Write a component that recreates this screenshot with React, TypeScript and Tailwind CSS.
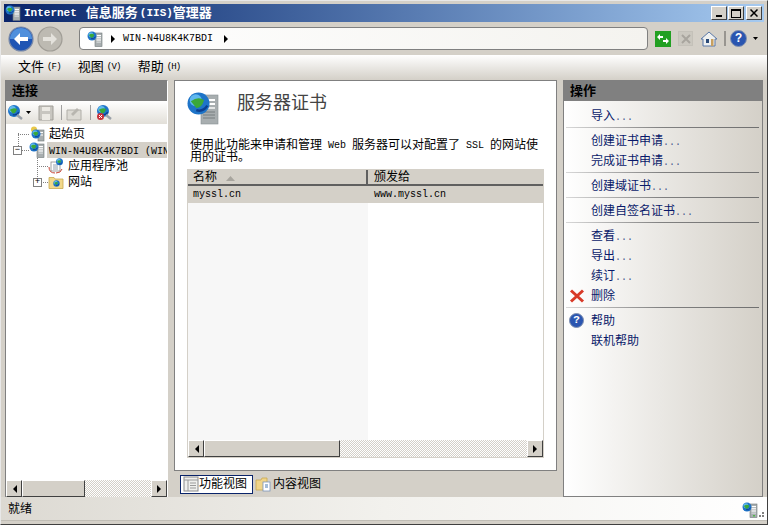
import React from "react";

const FONT = { fontFamily: '"Liberation Mono", "Noto Sans CJK SC", monospace' };

function Globe({ cx, cy, r }: { cx: number; cy: number; r: number }) {
  return (
    <g>
      <circle cx={cx} cy={cy} r={r} fill="#1e74c8" />
      <circle cx={cx - r * 0.25} cy={cy - r * 0.3} r={r * 0.55} fill="#5fb8ee" />
      <path d={`M${cx - r * 0.7} ${cy - r * 0.2} q${r * 0.7} ${-r * 0.5} ${r * 1.2} ${-r * 0.1} q${-r * 0.2} ${r * 0.7} ${-r * 0.7} ${r * 0.7} z`} fill="#3aa83a" />
      <path d={`M${cx - r * 0.2} ${cy + r * 0.6} q${r * 0.6} ${r * 0.2} ${r} ${-r * 0.4}`} stroke="#0c3f90" strokeWidth={r * 0.22} fill="none" />
    </g>
  );
}

function ServerIcon({ size = 16, badge }: { size?: number; badge?: boolean }) {
  return (
    <svg width={size} height={size} viewBox="0 0 16 16" className="shrink-0">
      <rect x="8" y="2" width="7" height="13.5" fill="#a8aeb0" stroke="#70787a" strokeWidth="0.6" />
      <rect x="9.5" y="4" width="4.5" height="1.2" fill="#fff" />
      <rect x="9.5" y="6.2" width="4.5" height="1.2" fill="#fff" />
      <rect x="9.5" y="8.4" width="4.5" height="1.2" fill="#fff" />
      <rect x="9.5" y="10.6" width="4.5" height="1" fill="#dfe3e3" />
      <Globe cx={5} cy={5} r={4.5} />
      {badge && <rect x="11" y="13" width="2" height="1.5" fill="#50b848" />}
    </svg>
  );
}

function ConnectIcon({ stop }: { stop?: boolean }) {
  return (
    <svg width="17" height="17" viewBox="0 0 17 17" className="shrink-0">
      <Globe cx={7} cy={7} r={6} />
      <path d="M10 11l5 4" stroke="#9aa0a8" strokeWidth="2.4" />
      {stop && <circle cx="4.5" cy="12.5" r="3.5" fill="#c8303a" />}
      {stop && <path d="M3 11l3 3M6 11l-3 3" stroke="#fff" strokeWidth="1" />}
    </svg>
  );
}

function StartIcon() {
  return (
    <svg width="16" height="16" viewBox="0 0 16 16" className="shrink-0">
      <rect x="9" y="4" width="6" height="11" fill="#a8aeb0" stroke="#70787a" strokeWidth="0.6" />
      <rect x="10" y="6" width="4" height="1" fill="#fff" />
      <rect x="10" y="8.5" width="4" height="1" fill="#fff" />
      <circle cx="5" cy="3.5" r="3" fill="#e8c84a" />
      <Globe cx={7} cy={8} r={4.5} />
    </svg>
  );
}

function PoolIcon() {
  return (
    <svg width="16" height="16" viewBox="0 0 16 16" className="shrink-0">
      <rect x="3" y="4" width="9" height="9" fill="#fff" stroke="#8a8a8a" strokeWidth="0.8" />
      <path d="M5 7h5M5 9h5M5 11h5" stroke="#7a8a9a" strokeWidth="0.8" />
      <Globe cx={11.5} cy={3.8} r={3.5} />
      <path d="M1 9q0 6 6 6M14 11q-1 4-6 4" stroke="#c84838" strokeWidth="1" fill="none" />
    </svg>
  );
}

function FolderIcon() {
  return (
    <svg width="16" height="16" viewBox="0 0 16 16" className="shrink-0">
      <path d="M1 3.5h5l1 1.5h8v9.5H1z" fill="#f2d88a" stroke="#c8a850" strokeWidth="0.8" />
      <Globe cx={8.5} cy={9.5} r={3.2} />
    </svg>
  );
}

function Arrow({ dir }: { dir: "left" | "right" }) {
  return (
    <svg width="5" height="8" viewBox="0 0 5 8">
      <path d={dir === "left" ? "M5 0v8L1 4z" : "M0 0v8l4-4z"} fill="#000" />
    </svg>
  );
}

function ScrollBar({ thumb }: { thumb: string }) {
  return (
    <div className="flex h-[17px] shrink-0 bg-[repeating-conic-gradient(#d4d0c8_0_25%,#ffffff_0_50%)] bg-[length:2px_2px]">
      <ScrollBtn dir="left" />
      <div style={{ width: thumb }} className="border border-t-white border-l-white border-r-[#404040] border-b-[#404040] bg-[#d4d0c8]" />
      <div className="flex-1" />
      <ScrollBtn dir="right" />
    </div>
  );
}

function ScrollBtn({ dir }: { dir: "left" | "right" }) {
  return (
    <div className="flex h-[17px] w-[16px] shrink-0 items-center justify-center border border-t-white border-l-white border-r-[#404040] border-b-[#404040] bg-[#d4d0c8]">
      <Arrow dir={dir} />
    </div>
  );
}

function PanelHeader({ title }: { title: string }) {
  return (
    <div className="flex h-[20px] shrink-0 items-center bg-[#808080] pl-[6px] pt-[2px] text-[13px] font-bold text-black">
      {title}
    </div>
  );
}

function Action({ label, dots, icon }: { label: string; dots?: boolean; icon?: React.ReactNode }) {
  return (
    <div className="relative flex h-[20px] items-center pl-[27px] pt-[4px] text-[12px] text-[#0a1a6a]">
      {icon && <span className="absolute left-[5px] top-[3px]">{icon}</span>}
      {label}
      {dots && <span className="text-[10px] text-[#4a5a90]">...</span>}
    </div>
  );
}

function Sep() {
  return (
    <div className="flex h-[5px] items-center pl-[2px] pr-[3px]">
      <div className="h-px w-full bg-gradient-to-r from-[#d8d8d8] via-[#808080] to-[#707070]" />
    </div>
  );
}

function TreeRow({ label, icon, indent, expander, expLeft, selected }: { label: string; icon: React.ReactNode; indent: number; expander?: string; expLeft?: number; selected?: boolean }) {
  return (
    <div className="relative flex h-[16px] items-center" style={{ paddingLeft: indent }}>
      {expander && (
        <span className="absolute z-10 flex h-[9px] w-[9px] items-center justify-center border border-[#808080] bg-white text-[9px] leading-none text-black" style={{ left: expLeft, top: 4 }}>
          {expander}
        </span>
      )}
      <span className="absolute top-[8px] h-0 border-t border-dotted border-[#808080]" style={{ left: indent - 11, width: 11 }} />
      {icon}
      <span className={`ml-[2px] flex h-[16px] flex-1 items-center overflow-hidden whitespace-nowrap pl-[2px] pt-[2px] ${selected ? "bg-[#d4d0c8] text-[10px]" : "text-[12px]"}`}>
        {label}
      </span>
    </div>
  );
}

export default function App() {
  return (
    <div style={FONT} className="flex h-[525px] w-[768px] flex-col overflow-hidden border border-[#404040] border-t-[#e8e8e8] border-l-[#e8e8e8] bg-[#d4d0c8] px-[3px] pt-[3px] text-black">
      {/* TITLE BAR */}
      <div className="flex h-[18px] shrink-0 items-center bg-gradient-to-r from-[#0a246a] to-[#a6caf0] pl-[1px] pr-[2px]">
        <ServerIcon />
        <span className="ml-[3px] flex items-center pt-[1px] text-[13px] font-bold text-white">
          <span className="text-[11px]">Internet</span>
          <span className="ml-[9px]">信息服务</span>
          <span className="ml-[2px] text-[11px]">(IIS)</span>
          <span>管理器</span>
        </span>
        <div className="ml-auto flex items-center gap-[1px]">
          <div className="flex h-[14px] w-[16px] items-end justify-center border border-t-white border-l-white border-r-[#404040] border-b-[#404040] bg-[#d4d0c8] pb-[2px]">
            <div className="h-[2px] w-[6px] bg-black" />
          </div>
          <div className="mr-[1px] flex h-[14px] w-[16px] items-center justify-center border border-t-white border-l-white border-r-[#404040] border-b-[#404040] bg-[#d4d0c8]">
            <div className="h-[9px] w-[10px] border border-t-2 border-black" />
          </div>
          <div className="flex h-[14px] w-[16px] items-center justify-center border border-t-white border-l-white border-r-[#404040] border-b-[#404040] bg-[#d4d0c8]">
            <svg width="8" height="8" viewBox="0 0 8 8"><path d="M0.5 0.5l7 7M7.5 0.5l-7 7" stroke="#000" strokeWidth="1.5" /></svg>
          </div>
        </div>
      </div>

      {/* NAV BAR */}
      <div className="-mx-[3px] flex h-[33px] shrink-0 items-center bg-[#d4d0c8] pl-[7px]">
        <svg width="26" height="26" viewBox="0 0 26 26" className="shrink-0">
          <circle cx="13" cy="13" r="12" fill="#1f55b4" stroke="#7a8aa8" strokeWidth="1.2" />
          <path d="M2 13a11 11 0 0 1 22 0z" fill="#4f8fdc" />
          <path d="M6 13l6-6v4h8v4h-8v4z" fill="#fff" />
        </svg>
        <svg width="26" height="26" viewBox="0 0 26 26" className="ml-[3px] shrink-0">
          <circle cx="13" cy="13" r="12" fill="#bdbab2" stroke="#a09d96" strokeWidth="1.2" />
          <path d="M20 13l-6-6v4H6v4h8v4z" fill="#e4e2dc" />
        </svg>
        <div className="ml-[16px] flex h-[23px] w-[569px] items-center rounded-[4px] border border-[#808080] bg-gradient-to-r from-white to-[#f4f3ef] pl-[7px] text-[10px]">
          <ServerIcon />
          <span className="ml-[8px] mr-[7px] mt-[1px]"><Arrow dir="right" /></span>
          WIN-N4U8K4K7BDI
          <span className="ml-[11px] mt-[1px]"><Arrow dir="right" /></span>
        </div>
        <div className="ml-[7px] flex h-[16px] w-[16px] items-center justify-center bg-[#22a022]">
          <svg width="14" height="12" viewBox="0 0 14 12"><path d="M1 4l3-3v2h3v2H4v2zM13 8l-3 3V9H7V7h3V5z" fill="#fff" /></svg>
        </div>
        <div className="ml-[7px] flex h-[15px] w-[15px] items-center justify-center border border-[#c4c1b9] bg-[#cbc8c0]">
          <svg width="10" height="10" viewBox="0 0 10 10"><path d="M1 1l8 8M9 1l-8 8" stroke="#a8a59e" strokeWidth="2" /></svg>
        </div>
        <svg width="18" height="18" viewBox="0 0 18 18" className="ml-[7px] shrink-0">
          <path d="M1 9l8-7 8 7h-2v7H3V9z" fill="#eef0f0" stroke="#5a78a8" strokeWidth="1" />
          <rect x="6" y="9" width="3" height="4" fill="#2a4a78" />
          <rect x="11" y="9" width="2.5" height="7" fill="#c8a060" />
        </svg>
        <div className="ml-[6px] h-[15px] w-[2px] bg-[#989590]" />
        <div className="ml-[4px] flex h-[17px] w-[17px] items-center justify-center rounded-full border border-[#8090b0] bg-[#2a55b0] text-[12px] font-bold leading-none text-white">?</div>
        <svg width="5" height="3" viewBox="0 0 5 3" className="ml-[6px]"><path d="M0 0h5L2.5 3z" fill="#000" /></svg>
      </div>

      {/* MENU */}
      <div className="-mx-[3px] flex h-[25px] shrink-0 items-center gap-[17px] bg-gradient-to-b from-white to-[#d4d0c8] pl-[17px] text-[13px]">
        <span className="flex items-center">文件<span className="ml-[3px] text-[9px] tracking-[-0.8px]">(F)</span></span>
        <span className="flex items-center">视图<span className="ml-[3px] text-[9px] tracking-[-0.8px]">(V)</span></span>
        <span className="flex items-center">帮助<span className="ml-[3px] text-[9px] tracking-[-0.8px]">(H)</span></span>
      </div>

      {/* MAIN */}
      <div className="-mx-[3px] flex h-[417px] shrink-0 items-stretch pl-[4px] pr-[3px]">
        {/* LEFT PANEL */}
        <div className="flex w-[163px] shrink-0 flex-col border border-t-[#808080] border-l-[#808080] border-r-white border-b-0 bg-white">
          <PanelHeader title="连接" />
          <div className="flex h-[23px] shrink-0 items-center bg-gradient-to-b from-white to-[#e2dfd8] pl-[1px]">
            <ConnectIcon />
            <svg width="5" height="3" viewBox="0 0 5 3" className="ml-[2px]"><path d="M0 0h5L2.5 3z" fill="#000" /></svg>
            <svg width="16" height="16" viewBox="0 0 16 16" className="ml-[7px]">
              <path d="M1 1h14v14H1z" fill="#c8c6c0" stroke="#a09e98" />
              <rect x="4" y="2" width="8" height="4" fill="#eceae4" />
              <rect x="4" y="9" width="8" height="6" fill="#eceae4" />
            </svg>
            <div className="ml-[7px] h-[15px] w-px bg-[#a0a0a0]" />
            <svg width="16" height="16" viewBox="0 0 16 16" className="ml-[4px]">
              <path d="M1 5h14v10H1z" fill="#dcdad4" stroke="#b0aea8" />
              <path d="M5 9l6-6 2 2-6 6z" fill="#b8b6b0" />
            </svg>
            <div className="ml-[8px] h-[15px] w-px bg-[#a0a0a0]" />
            <span className="ml-[5px]"><ConnectIcon stop /></span>
          </div>
          <div className="relative min-h-0 flex-1 overflow-hidden pt-[2px]">
            <div className="absolute left-[12px] top-[9px] h-[13px] border-l border-dotted border-[#808080]" />
            <div className="absolute left-[31px] top-[31px] h-[22px] border-l border-dotted border-[#808080]" />
            <TreeRow label="起始页" icon={<StartIcon />} indent={23} />
            <TreeRow label="WIN-N4U8K4K7BDI (WIN-N4U8K4K7BDI\Administrator)" icon={<ServerIcon />} indent={23} expander="−" expLeft={7} selected />
            <TreeRow label="应用程序池" icon={<PoolIcon />} indent={42} />
            <TreeRow label="网站" icon={<FolderIcon />} indent={42} expander="+" expLeft={27} />
          </div>
          <ScrollBar thumb="63px" />
        </div>

        {/* CENTER */}
        <div className="ml-[6px] flex w-[383px] shrink-0 flex-col">
          <div className="flex h-[391px] shrink-0 flex-col border border-[#808080] bg-white pl-[12px] pt-[11px]">
            <div className="flex h-[38px] shrink-0 items-start">
              <svg width="34" height="36" viewBox="0 0 34 36" className="shrink-0">
                <rect x="14" y="3" width="17" height="29" fill="#a8aeb0" stroke="#889094" strokeWidth="0.6" />
                <rect x="16" y="7" width="12" height="2" fill="#fff" />
                <rect x="16" y="11" width="12" height="2" fill="#fff" />
                <rect x="16" y="15" width="12" height="2" fill="#e4e6e6" />
                <path d="M16 20h12M16 23h12M16 26h12" stroke="#6a7274" strokeWidth="0.8" />
                <Globe cx={11.5} cy={11.5} r={11} />
              </svg>
              <span className="ml-[16px] text-[18px] leading-[24px] text-[#444444]">服务器证书</span>
            </div>
            <div className="mt-[10px] shrink-0 pl-[3px] text-[12px] leading-[12px]">
              <div className="flex h-[12px] items-center whitespace-nowrap">
                使用此功能来申请和管理<span className="px-[6px] text-[10px]">Web</span>服务器可以对配置了<span className="px-[6px] text-[10px]">SSL</span>的网站使
              </div>
              <div className="flex h-[12px] items-center whitespace-nowrap">用的证书。</div>
            </div>
            <div className="mt-[5px] flex h-[289px] w-[357px] shrink-0 flex-col border border-[#d4d0c8]">
              <div className="flex h-[16px] shrink-0 border-b-2 border-[#606060] bg-[#d4d0c8] text-[12px] leading-[12px]">
                <div className="flex w-[180px] items-center border-r-2 border-[#606060] pl-[5px] pt-[2px]">
                  名称
                  <svg width="9" height="5" viewBox="0 0 9 5" className="ml-[9px]"><path d="M4.5 0L9 5H0z" fill="#a8a59e" /></svg>
                </div>
                <div className="flex items-center pl-[6px] pt-[2px]">颁发给</div>
              </div>
              <div className="flex h-[17px] shrink-0 items-center bg-[#d4d0c8] text-[10px]">
                <div className="w-[180px] pl-[5px]">myssl.cn</div>
                <div className="pl-[6px]">www.myssl.cn</div>
              </div>
              <div className="flex min-h-0 flex-1">
                <div className="w-[180px] bg-[#f7f7f7]" />
              </div>
              <ScrollBar thumb="136px" />
            </div>
          </div>
          <div className="flex h-[25px] items-center pl-[6px] pt-[1px] text-[12px]">
            <div className="flex h-[19px] items-center border border-[#0a246a] bg-white pl-[2px] pr-[5px]">
              <svg width="16" height="16" viewBox="0 0 16 16" className="shrink-0">
                <rect x="1" y="1" width="14" height="14" fill="#f0f0ee" stroke="#8a8a8a" />
                <path d="M1 4h14M5 4v11M7 7h6M7 9.5h6M7 12h6" stroke="#9a9a9a" />
              </svg>
              <span className="pt-[1px]">功能视图</span>
            </div>
            <svg width="16" height="16" viewBox="0 0 16 16" className="ml-[2px] shrink-0">
              <path d="M1 4h5l1-2h5v12H1z" fill="#f0d488" stroke="#c8a850" strokeWidth="0.8" />
              <rect x="8" y="6" width="7" height="9" fill="#fff" stroke="#7a94b8" strokeWidth="0.8" />
              <path d="M10 9h3M10 11h3" stroke="#4a7ab0" />
            </svg>
            <span className="ml-[2px] pt-[1px]">内容视图</span>
          </div>
        </div>

        {/* ACTIONS */}
        <div className="ml-[6px] flex w-[200px] shrink-0 flex-col border border-[#808080] bg-gradient-to-r from-white to-[#d4d0c8]">
          <PanelHeader title="操作" />
          <div className="pt-[4px]">
            <Action label="导入" dots />
            <Sep />
            <Action label="创建证书申请" dots />
            <Action label="完成证书申请" dots />
            <Sep />
            <Action label="创建域证书" dots />
            <Sep />
            <Action label="创建自签名证书" dots />
            <Sep />
            <Action label="查看" dots />
            <Action label="导出" dots />
            <Action label="续订" dots />
            <Action
              label="删除"
              icon={
                <svg width="16" height="16" viewBox="0 0 16 16">
                  <path d="M2 2.5l12 11M14 2.5l-12 11" stroke="#d83a28" strokeWidth="3" />
                </svg>
              }
            />
            <Sep />
            <Action
              label="帮助"
              icon={<div className="flex h-[15px] w-[15px] items-center justify-center rounded-full border border-[#8090b0] bg-[#2a55b0] text-[11px] font-bold leading-none text-white">?</div>}
            />
            <Action label="联机帮助" />
          </div>
        </div>
      </div>

      {/* STATUS BAR */}
      <div className="-mx-[3px] flex h-[24px] shrink-0 items-center border-b border-[#c0bdb5] bg-gradient-to-r from-[#dcd9d2] via-[#f2f1ed] to-white pl-[7px] pr-[3px] pt-[3px] text-[12px]">
        就绪
        <div className="ml-auto flex items-end">
          <ServerIcon badge />
          <div className="mb-[1px] ml-[1px] grid grid-cols-2 gap-[1px]">
            <div className="col-start-2 h-[2px] w-[2px] bg-[#808080]" />
            <div className="h-[2px] w-[2px] bg-[#808080]" />
            <div className="h-[2px] w-[2px] bg-[#808080]" />
          </div>
        </div>
      </div>
    </div>
  );
}
